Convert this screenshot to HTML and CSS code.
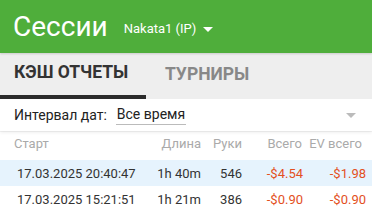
FILE: index.html
```html
<!DOCTYPE html>
<html>
<head>
<meta charset="utf-8">
<link rel="stylesheet" href="styles.css">
</head>
<body>
<div class="app">
  <header class="topbar">
    <h1 class="title">Сессии</h1>
    <div class="account">Nakata1 (IP)<span class="caret"></span></div>
  </header>
  <nav class="tabs">
    <div class="tab active">КЭШ ОТЧЕТЫ</div>
    <div class="tab">ТУРНИРЫ</div>
  </nav>
  <div class="filter">
    <span class="filter-label">Интервал дат:</span>
    <span class="filter-value">Все время</span>
    <span class="filter-caret"></span>
  </div>
  <div class="table">
    <div class="row head">
      <div class="c-start">Старт</div>
      <div class="c-len">Длина</div>
      <div class="c-hands">Руки</div>
      <div class="c-total">Всего</div>
      <div class="c-ev">EV всего</div>
    </div>
    <div class="row data selected">
      <div class="c-start">17.03.2025 20:40:47</div>
      <div class="c-len">1h 40m</div>
      <div class="c-hands">546</div>
      <div class="c-total neg">-$4.54</div>
      <div class="c-ev neg">-$1.98</div>
    </div>
    <div class="row data">
      <div class="c-start">17.03.2025 15:21:51</div>
      <div class="c-len">1h 21m</div>
      <div class="c-hands">386</div>
      <div class="c-total neg">-$0.90</div>
      <div class="c-ev neg">-$0.90</div>
    </div>
  </div>
</div>
</body>
</html>
```
FILE: styles.css
```css
* { box-sizing: border-box; }
html, body { margin: 0; padding: 0; }
body {
  width: 372px;
  height: 212px;
  overflow: hidden;
  background: #fff;
  font-family: Roboto, "Noto Sans", sans-serif;
}
.app { display: flex; flex-direction: column; }
.topbar {
  height: 53px;
  background: #4fae3b;
  display: flex;
  align-items: center;
  padding: 0 0 0 13px;
  color: #fff;
  position: relative;
  z-index: 2;
  box-shadow: 0 1px 2px rgba(0,0,0,0.15);
}
.title {
  margin: 0;
  font-size: 28px;
  font-weight: 400;
  line-height: 1;
}
.account {
  margin-left: 16px;
  margin-top: 4px;
  font-size: 13px;
  font-weight: 400;
  display: flex;
  align-items: center;
}
.caret {
  display: inline-block;
  width: 0; height: 0;
  border-left: 5px solid transparent;
  border-right: 5px solid transparent;
  border-top: 5px solid #fff;
  margin-left: 7px;
  margin-top: 1px;
}
.tabs {
  height: 46px;
  background: #eeeeee;
  display: flex;
}
.tab {
  font-size: 17.5px;
  font-weight: 700;
  color: #888;
  display: flex;
  align-items: center;
  padding: 0 14px;
  margin-top: -4px;
}
.tab.active {
  color: #333;
  width: 146px;
  margin-top: 0;
  padding-bottom: 4px;
  border-bottom: 4px solid #2b2b2b;
}
.tab + .tab { padding-left: 19px; }
.filter {
  height: 32px;
  display: flex;
  align-items: center;
  padding: 0 14px;
  font-size: 14px;
  color: #222;
  position: relative;
  z-index: 1;
  box-shadow: 0 2px 3px rgba(0,0,0,0.06);
}
.filter-value {
  margin-left: 9px;
  padding: 0 1px 1px 1px;
  border-bottom: 1px solid #bbb;
  line-height: 18px;
}
.filter-caret {
  margin-left: auto;
  margin-right: 2px;
  width: 0; height: 0;
  border-left: 5px solid transparent;
  border-right: 5px solid transparent;
  border-top: 5px solid #bbb;
}
.table { display: flex; flex-direction: column; }
.row {
  display: grid;
  align-items: center;
}
.row > div { text-align: right; white-space: nowrap; }
.row > .c-start { text-align: left; }
.head {
  height: 29px;
  padding: 0 0 5px 14px;
  font-size: 13px;
  color: #aaa;
  border-top: 1px solid #f3f3f3;
  grid-template-columns: 130px 57px 41px 60px 60px;
}
.data {
  height: 26px;
  padding-left: 17px;
  font-size: 13px;
  color: #333;
  grid-template-columns: 124px 60px 41px 61px 63px;
}
.selected { background: #e6f3fd; }
.neg { color: #e3501e; }
```
